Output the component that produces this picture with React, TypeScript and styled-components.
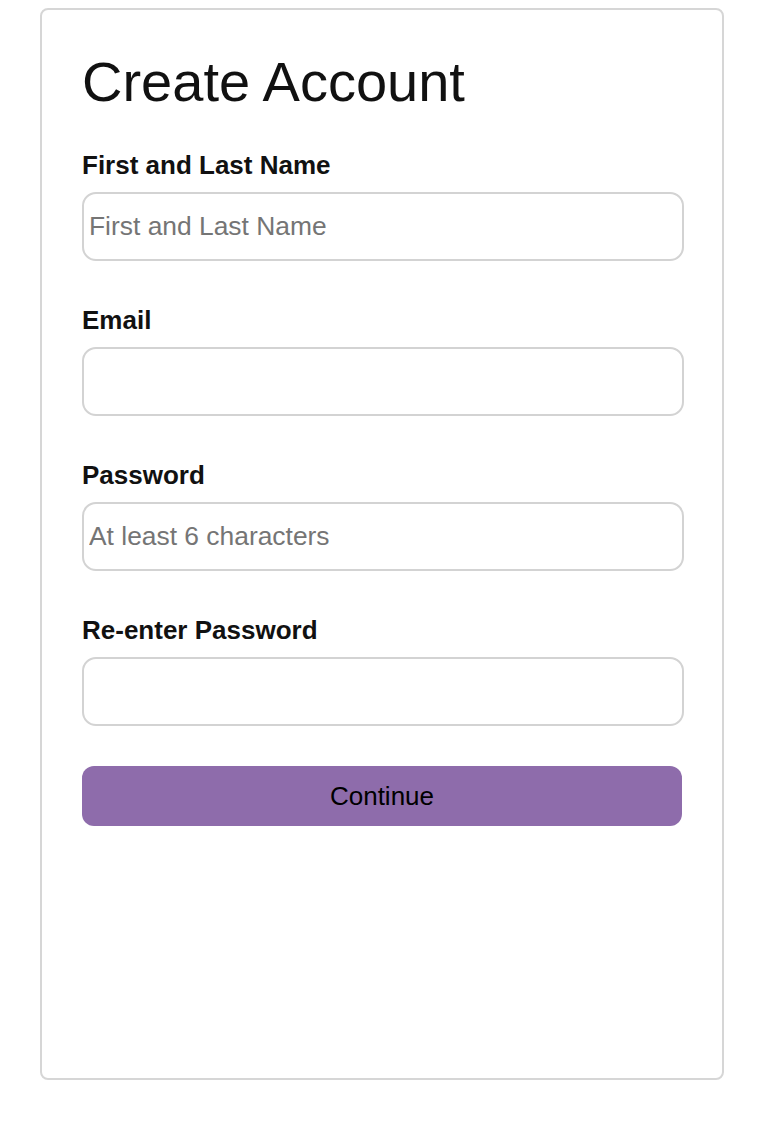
import React from "react";
import styled, { createGlobalStyle } from "styled-components";

const Global = createGlobalStyle`
  html, body {
    margin: 0;
    padding: 0;
    background: #ffffff;
  }
  body {
    font-family: "Liberation Sans", Arial, sans-serif;
    color: #111111;
  }
  * { box-sizing: border-box; }
`;

const Page = styled.div`
  padding: 8px 0 58px 40px;
`;

const Card = styled.form`
  width: 684px;
  height: 1072px;
  border: 2px solid #d6d6d6;
  border-radius: 8px;
  padding: 40px 40px 0 40px;
  display: flex;
  flex-direction: column;
`;

const Title = styled.h1`
  margin: 0 0 36px 0;
  font-size: 56px;
  font-weight: 400;
  line-height: 64px;
  color: #111111;
`;

const Field = styled.div`
  display: flex;
  flex-direction: column;
  gap: 12px;
  margin-bottom: 44px;
  &:last-of-type {
    margin-bottom: 40px;
  }
`;

const Label = styled.label`
  font-size: 26px;
  font-weight: 700;
  line-height: 30px;
  height: 30px;
  color: #111111;
`;

const Input = styled.input`
  width: 602px;
  height: 69px;
  flex: none;
  border: 2px solid #d3d3d3;
  border-radius: 14px;
  padding: 0 5px;
  font-family: "Liberation Sans", Arial, sans-serif;
  font-size: 26.4px;
  color: #111111;
  background: #ffffff;
  outline: none;
  &::placeholder {
    color: #757575;
  }
`;

const Button = styled.button`
  width: 600px;
  height: 60px;
  flex: none;
  border: none;
  border-radius: 12px;
  background: #8e6cab;
  color: #000000;
  font-family: "Liberation Sans", Arial, sans-serif;
  font-size: 26px;
  cursor: pointer;
`;

const fields = [
  { id: "name", label: "First and Last Name", placeholder: "First and Last Name", type: "text" },
  { id: "email", label: "Email", placeholder: "", type: "email" },
  { id: "password", label: "Password", placeholder: "At least 6 characters", type: "password" },
  { id: "password2", label: "Re-enter Password", placeholder: "", type: "password" },
];

export default function App() {
  return (
    <Page>
      <Global />
      <Card onSubmit={(e) => e.preventDefault()}>
        <Title>Create Account</Title>
        {fields.map((f) => (
          <Field key={f.id}>
            <Label htmlFor={f.id}>{f.label}</Label>
            <Input id={f.id} type={f.type} placeholder={f.placeholder} />
          </Field>
        ))}
        <Button type="submit">Continue</Button>
      </Card>
    </Page>
  );
}
